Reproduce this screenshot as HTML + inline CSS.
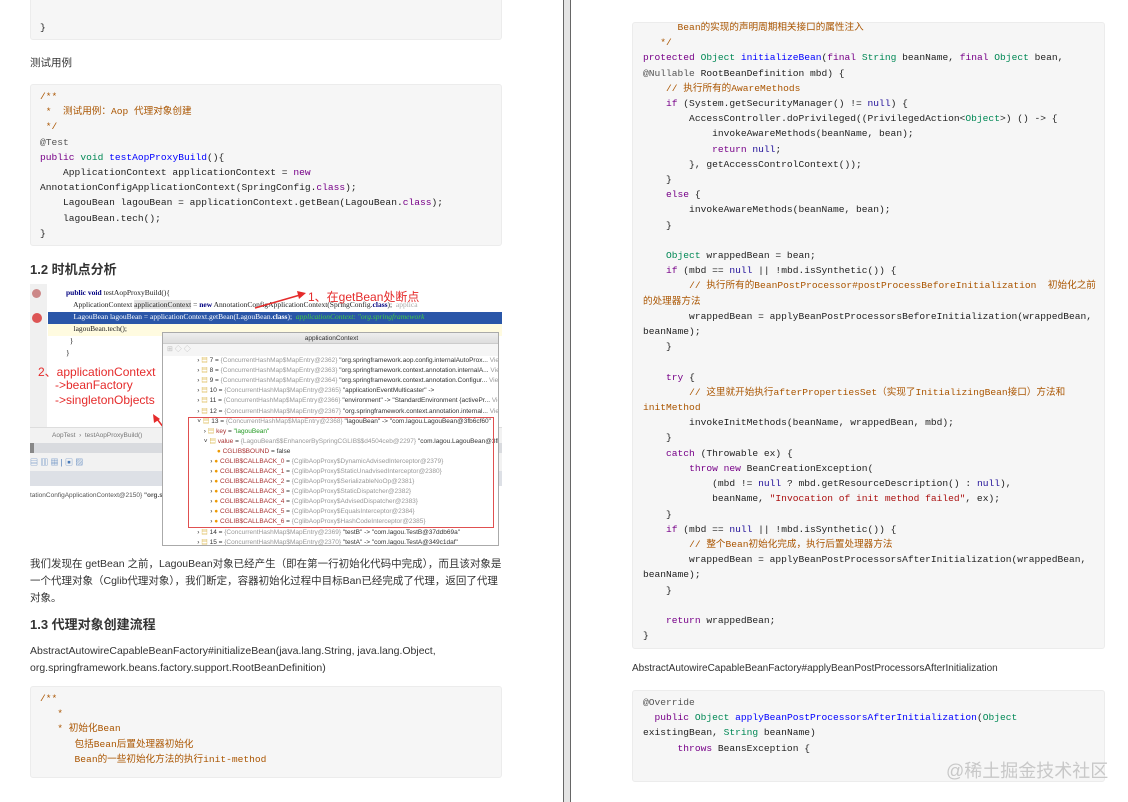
<!DOCTYPE html>
<html><head><meta charset="utf-8"><style>
*{margin:0;padding:0;box-sizing:border-box}
body{width:1128px;height:802px;background:#fff;position:relative;overflow:hidden;font-family:"Liberation Sans","Noto Sans CJK SC",sans-serif;color:#333}
.abs{position:absolute}
.box{position:absolute;background:#f6f6f6;border:1px solid #ececec;border-radius:3px;overflow:hidden}
pre{position:absolute;font-family:"Liberation Mono","Noto Sans CJK SC",monospace;font-size:9.6px;line-height:15.2px;color:#222;white-space:pre}
.k{color:#770088}.t{color:#008855}.d{color:#0000ff}.c{color:#aa5500}.s{color:#aa1111}.n{color:#221199}.a{color:#555}
.txt{position:absolute;font-size:10.5px;color:#333;white-space:nowrap}
h3{position:absolute;font-size:13px;font-weight:bold;color:#333;white-space:nowrap}
.row{position:absolute;left:0;font-size:6.5px;white-space:nowrap;color:#333;height:10px;line-height:10px}
.row .g{color:#999}.row .r{color:#a33}.row .gr{color:#292}
.red{color:#e52b2b;font-size:12px;position:absolute;white-space:nowrap}
</style></head><body>

<div class="abs" style="left:563px;top:0;width:8px;height:802px;background:#e4e4e4;border-left:1px solid #666;border-right:1px solid #666"></div>

<div class="box" style="left:30px;top:-4px;width:472px;height:44px"></div>
<pre style="left:40px;top:20px">}</pre>

<div class="txt" style="left:30px;top:55px">测试用例</div>

<div class="box" style="left:30px;top:84px;width:472px;height:162px"></div>
<pre style="left:40px;top:89px"><span class="c">/**
 *  测试用例：Aop 代理对象创建
 */</span>
<span class="a">@Test</span>
<span class="k">public</span> <span class="t">void</span> <span class="d">testAopProxyBuild</span>(){
    ApplicationContext applicationContext = <span class="k">new</span>
AnnotationConfigApplicationContext(SpringConfig.<span class="k">class</span>);
    LagouBean lagouBean = applicationContext.getBean(LagouBean.<span class="k">class</span>);
    lagouBean.tech();
}</pre>

<h3 style="left:30px;top:259px">1.2 时机点分析</h3>

<div class="abs" style="left:30px;top:284px;width:472px;height:262px;overflow:hidden;background:#fff">
  <div class="abs" style="left:0;top:0;width:17px;height:143px;background:#f0f0f0"></div>
  <div class="abs" style="left:2px;top:5px;width:9px;height:9px;border-radius:50%;background:#c88"></div>
  <div class="abs" style="left:2px;top:29px;width:10px;height:10px;border-radius:50%;background:#d55"></div>
  <div class="abs" style="left:18px;top:28px;width:454px;height:12px;background:#2a56a8"></div>
  <div class="abs" style="left:18px;top:40px;width:454px;height:12px;background:#fffbe0"></div>
  <pre style="left:36px;top:3px;font-size:7.5px;line-height:12px;font-family:'Liberation Serif',serif"><b class="n" style="color:#000080">public void</b> testAopProxyBuild(){
    ApplicationContext <span style="background:#e4e4e4">applicationContext</span> = <b style="color:#000080">new</b> AnnotationConfigApplicationContext(SpringConfig.<b style="color:#000080">class</b>);  <span style="color:#aaa">applica</span>
    <span style="color:#fff">LagouBean lagouBean = applicationContext.getBean(LagouBean.<b>class</b>);</span>  <i style="color:#4c4">applicationContext: "org.springframework</i>
    lagouBean.tech();
  }
}</pre>
  <div class="abs" style="left:0;top:143px;width:472px;height:16px;background:#f2f2f2;border-top:1px solid #ddd;font-size:6.5px;color:#777;padding:4px 0 0 22px">AopTest &nbsp;›&nbsp; testAopProxyBuild()</div>
  <div class="abs" style="left:0;top:159px;width:472px;height:10px;background:#d9dbdf"></div>
  <div class="abs" style="left:0;top:159px;width:4px;height:10px;background:#888"></div>
  <div class="abs" style="left:0;top:169px;width:472px;height:18px;background:#f2f2f2;font-size:8px;color:#4a7ab8;padding:4px 0 0 0">▤ ▥ ▦ | ▣ ▨</div>
  <div class="abs" style="left:0;top:187px;width:472px;height:15px;background:#dde0e6"></div>
  <div class="abs" style="left:0;top:208px;font-size:6.5px;color:#555;white-space:nowrap">tationConfigApplicationContext@2150} <b>"org.spr</b></div>
</div>
<svg class="abs" style="left:0;top:0" width="560" height="560">
  <line x1="255" y1="308" x2="300" y2="295" stroke="#e52b2b" stroke-width="1.5"/>
  <polygon points="306,293 297,291 299,299" fill="#e52b2b"/>
  <line x1="185" y1="455" x2="157" y2="419" stroke="#e52b2b" stroke-width="1.5"/>
  <polygon points="153,414 154,423 160,419" fill="#e52b2b"/>
</svg>
<div class="red" style="left:308px;top:288px">1、在getBean处断点</div>
<div class="red" style="left:38px;top:363px">2、applicationContext</div>
<div class="red" style="left:55px;top:378px">->beanFactory</div>
<div class="red" style="left:55px;top:393px">->singletonObjects</div>

<div class="abs" style="left:162px;top:332px;width:337px;height:214px;background:#fff;border:1px solid #aaa;overflow:hidden">
  <div class="abs" style="left:0;top:0;width:337px;height:11px;background:linear-gradient(#eee,#ddd);border-bottom:1px solid #ccc;font-size:6.5px;text-align:center;line-height:11px;color:#333">applicationContext</div>
  <div class="abs" style="left:0;top:11px;width:337px;height:12px;background:#f5f5f5;font-size:7px;color:#bbb;padding-left:4px">⊞ ◇ ◇</div>
  <div class="abs" style="left:0;top:23px;width:337px;height:191px">
    <div class="row" style="top:0">　　　　　 › <span style="color:#c90">▤</span> 7 = <span class="g">{ConcurrentHashMap$MapEntry@2362}</span> "org.springframework.aop.config.internalAutoProx... <span class="g">View</span></div>
    <div class="row" style="top:10px">　　　　　 › <span style="color:#c90">▤</span> 8 = <span class="g">{ConcurrentHashMap$MapEntry@2363}</span> "org.springframework.context.annotation.internalA... <span class="g">View</span></div>
    <div class="row" style="top:20px">　　　　　 › <span style="color:#c90">▤</span> 9 = <span class="g">{ConcurrentHashMap$MapEntry@2364}</span> "org.springframework.context.annotation.Configur... <span class="g">View</span></div>
    <div class="row" style="top:30px">　　　　　 › <span style="color:#c90">▤</span> 10 = <span class="g">{ConcurrentHashMap$MapEntry@2365}</span> "applicationEventMulticaster" -></div>
    <div class="row" style="top:40px">　　　　　 › <span style="color:#c90">▤</span> 11 = <span class="g">{ConcurrentHashMap$MapEntry@2366}</span> "environment" -> "StandardEnvironment {activePr... <span class="g">View</span></div>
    <div class="row" style="top:51px">　　　　　 › <span style="color:#c90">▤</span> 12 = <span class="g">{ConcurrentHashMap$MapEntry@2367}</span> "org.springframework.context.annotation.internal... <span class="g">View</span></div>
    <div class="row" style="top:61px">　　　　　 ˅ <span style="color:#c90">▤</span> 13 = <span class="g">{ConcurrentHashMap$MapEntry@2368}</span> "lagouBean" -> "com.lagou.LagouBean@3fb6cf60"</div>
    <div class="row" style="top:71px">　　　　　　 › <span style="color:#c90">▤</span> <span class="r">key</span> = <span class="gr">"lagouBean"</span></div>
    <div class="row" style="top:81px">　　　　　　 ˅ <span style="color:#c90">▤</span> <span class="r">value</span> = <span class="g">{LagouBean$$EnhancerBySpringCGLIB$$d4504ceb@2297}</span> "com.lagou.LagouBean@3fb6cf6</div>
    <div class="row" style="top:91px">　　　　　　　　 <span style="color:#e90">●</span> <span class="r">CGLIB$BOUND</span> = false</div>
    <div class="row" style="top:101px">　　　　　　　 › <span style="color:#e90">●</span> <span class="r">CGLIB$CALLBACK_0</span> = <span class="g">{CglibAopProxy$DynamicAdvisedInterceptor@2379}</span></div>
    <div class="row" style="top:111px">　　　　　　　 › <span style="color:#e90">●</span> <span class="r">CGLIB$CALLBACK_1</span> = <span class="g">{CglibAopProxy$StaticUnadvisedInterceptor@2380}</span></div>
    <div class="row" style="top:121px">　　　　　　　 › <span style="color:#e90">●</span> <span class="r">CGLIB$CALLBACK_2</span> = <span class="g">{CglibAopProxy$SerializableNoOp@2381}</span></div>
    <div class="row" style="top:131px">　　　　　　　 › <span style="color:#e90">●</span> <span class="r">CGLIB$CALLBACK_3</span> = <span class="g">{CglibAopProxy$StaticDispatcher@2382}</span></div>
    <div class="row" style="top:141px">　　　　　　　 › <span style="color:#e90">●</span> <span class="r">CGLIB$CALLBACK_4</span> = <span class="g">{CglibAopProxy$AdvisedDispatcher@2383}</span></div>
    <div class="row" style="top:151px">　　　　　　　 › <span style="color:#e90">●</span> <span class="r">CGLIB$CALLBACK_5</span> = <span class="g">{CglibAopProxy$EqualsInterceptor@2384}</span></div>
    <div class="row" style="top:161px">　　　　　　　 › <span style="color:#e90">●</span> <span class="r">CGLIB$CALLBACK_6</span> = <span class="g">{CglibAopProxy$HashCodeInterceptor@2385}</span></div>
    <div class="row" style="top:172px">　　　　　 › <span style="color:#c90">▤</span> 14 = <span class="g">{ConcurrentHashMap$MapEntry@2369}</span> "testB" -> "com.lagou.TestB@37ddb69a"</div>
    <div class="row" style="top:182px">　　　　　 › <span style="color:#c90">▤</span> 15 = <span class="g">{ConcurrentHashMap$MapEntry@2370}</span> "testA" -> "com.lagou.TestA@349c1daf"</div>
  </div>
  <div class="abs" style="left:25px;top:84px;width:306px;height:111px;border:1px solid #e05050"></div>
</div>

<div class="txt" style="left:30px;top:556px;font-size:10.5px;line-height:17px;white-space:normal;width:475px">我们发现在 getBean 之前，LagouBean对象已经产生（即在第一行初始化代码中完成），而且该对象是一个代理对象（Cglib代理对象），我们断定，容器初始化过程中目标Ban已经完成了代理，返回了代理对象。</div>

<h3 style="left:30px;top:614px">1.3 代理对象创建流程</h3>

<div class="txt" style="left:30px;top:643px;line-height:16.5px">AbstractAutowireCapableBeanFactory#initializeBean(java.lang.String, java.lang.Object,<br>org.springframework.beans.factory.support.RootBeanDefinition)</div>

<div class="box" style="left:30px;top:686px;width:472px;height:92px"></div>
<pre style="left:40px;top:691px"><span class="c">/**
   *
   * 初始化Bean
      包括Bean后置处理器初始化
      Bean的一些初始化方法的执行init-method</span></pre>

<div class="box" style="left:632px;top:22px;width:473px;height:627px"></div>
<pre style="left:643px;top:20px"><span class="c">      Bean的实现的声明周期相关接口的属性注入
   */</span>
<span class="k">protected</span> <span class="t">Object</span> <span class="d">initializeBean</span>(<span class="k">final</span> <span class="t">String</span> beanName, <span class="k">final</span> <span class="t">Object</span> bean,
<span class="a">@Nullable</span> RootBeanDefinition mbd) {
    <span class="c">// 执行所有的AwareMethods</span>
    <span class="k">if</span> (System.getSecurityManager() != <span class="n">null</span>) {
        AccessController.doPrivileged((PrivilegedAction&lt;<span class="t">Object</span>&gt;) () -&gt; {
            invokeAwareMethods(beanName, bean);
            <span class="k">return</span> <span class="n">null</span>;
        }, getAccessControlContext());
    }
    <span class="k">else</span> {
        invokeAwareMethods(beanName, bean);
    }

    <span class="t">Object</span> wrappedBean = bean;
    <span class="k">if</span> (mbd == <span class="n">null</span> || !mbd.isSynthetic()) {
        <span class="c">// 执行所有的BeanPostProcessor#postProcessBeforeInitialization  初始化之前
的处理器方法</span>
        wrappedBean = applyBeanPostProcessorsBeforeInitialization(wrappedBean,
beanName);
    }

    <span class="k">try</span> {
        <span class="c">// 这里就开始执行afterPropertiesSet（实现了InitializingBean接口）方法和
initMethod</span>
        invokeInitMethods(beanName, wrappedBean, mbd);
    }
    <span class="k">catch</span> (Throwable ex) {
        <span class="k">throw</span> <span class="k">new</span> BeanCreationException(
            (mbd != <span class="n">null</span> ? mbd.getResourceDescription() : <span class="n">null</span>),
            beanName, <span class="s">"Invocation of init method failed"</span>, ex);
    }
    <span class="k">if</span> (mbd == <span class="n">null</span> || !mbd.isSynthetic()) {
        <span class="c">// 整个Bean初始化完成，执行后置处理器方法</span>
        wrappedBean = applyBeanPostProcessorsAfterInitialization(wrappedBean,
beanName);
    }

    <span class="k">return</span> wrappedBean;
}</pre>

<div class="txt" style="left:632px;top:663px;font-size:10px">AbstractAutowireCapableBeanFactory#applyBeanPostProcessorsAfterInitialization</div>

<div class="box" style="left:632px;top:690px;width:473px;height:92px"></div>
<pre style="left:643px;top:695px"><span class="a">@Override</span>
  <span class="k">public</span> <span class="t">Object</span> <span class="d">applyBeanPostProcessorsAfterInitialization</span>(<span class="t">Object</span>
existingBean, <span class="t">String</span> beanName)
      <span class="k">throws</span> BeansException {</pre>

<div class="abs" style="left:946px;top:757px;font-size:18px;color:#c8c8c8;white-space:nowrap">@稀土掘金技术社区</div>

</body></html>
